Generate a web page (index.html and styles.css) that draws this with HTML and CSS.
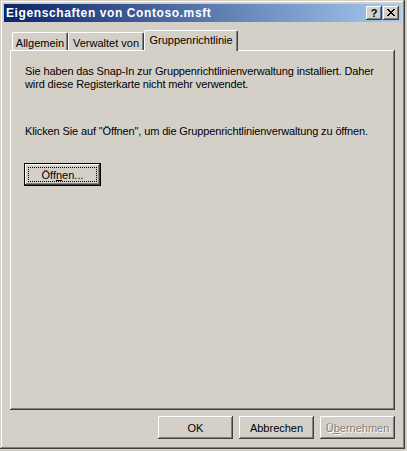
FILE: index.html
```html
<!DOCTYPE html>
<html lang="de">
<head>
<meta charset="utf-8">
<title>Eigenschaften von Contoso.msft</title>
<link rel="stylesheet" href="styles.css">
</head>
<body>
<div class="window">
  <div class="titlebar">
    <span class="title">Eigenschaften von Contoso.msft</span>
    <div class="caption-buttons">
      <div class="cap cap-help">?</div>
      <div class="cap cap-close">
        <svg width="8" height="7" viewBox="0 0 8 7" shape-rendering="crispEdges">
          <path d="M0 0h2v1h-2zM6 0h2v1h-2zM1 1h2v1h-2zM5 1h2v1h-2zM2 2h4v1h-4zM3 3h2v1h-2zM2 4h4v1h-4zM1 5h2v1h-2zM5 5h2v1h-2zM0 6h2v1h-2zM6 6h2v1h-2z" fill="#000"/>
        </svg>
      </div>
    </div>
  </div>
  <div class="body">
    <div class="tabs">
      <div class="tab tab-1">Allgemein</div>
      <div class="tab tab-2">Verwaltet von</div>
      <div class="tab tab-3 selected">Gruppenrichtlinie</div>
    </div>
    <div class="panel">
      <p class="text">Sie haben das Snap-In zur Gruppenrichtlinienverwaltung installiert. Daher<br>wird diese Registerkarte nicht mehr verwendet.</p>
      <p class="text text-2">Klicken Sie auf "Öffnen", um die Gruppenrichtlinienverwaltung zu öffnen.</p>
      <div class="btn btn-default">Öff<u>n</u>en...</div>
    </div>
    <div class="footer">
      <div class="btn">OK</div>
      <div class="btn">Abbrechen</div>
      <div class="btn disabled">Ü<u>b</u>ernehmen</div>
    </div>
  </div>
</div>
</body>
</html>
```

FILE: styles.css
```css
html, body {
  margin: 0;
  padding: 0;
  background: #d4d0c8;
}

body {
  font-family: "Liberation Sans", Arial, sans-serif;
  font-size: 11px;
  color: #000;
}

.window {
  width: 405px;
  height: 449px;
  box-sizing: border-box;
  padding: 4px;
  background: #d4d0c8;
  box-shadow: inset -1px -1px #404040, inset 1px 1px #d4d0c8, inset -2px -2px #808080, inset 2px 2px #ffffff;
  display: flex;
  flex-direction: column;
}

.titlebar {
  height: 18px;
  flex: none;
  background: linear-gradient(to right, #0a246a, #a6caf0);
  display: flex;
  align-items: center;
  padding-left: 2px;
  padding-right: 2px;
}

.title {
  color: #fff;
  font-weight: bold;
  font-size: 12px;
  letter-spacing: 0.6px;
  flex: 1;
  white-space: nowrap;
}

.caption-buttons {
  display: flex;
  gap: 0;
}

.cap {
  width: 16px;
  height: 14px;
  box-sizing: border-box;
  background: #d4d0c8;
  box-shadow: inset -1px -1px #404040, inset 1px 1px #ffffff, inset -2px -2px #808080, inset 2px 2px #d4d0c8;
  display: flex;
  align-items: center;
  justify-content: center;
}

.cap-help {
  font-weight: bold;
  font-size: 11px;
  line-height: 14px;
  padding-bottom: 1px;
  margin-right: 1px;
}

.cap-close svg {
  display: block;
  margin-top: -1px;
}

.body {
  flex: 1;
  display: flex;
  flex-direction: column;
  padding: 8px 6px 0;
}

.tabs {
  height: 20px;
  display: flex;
  align-items: flex-end;
  padding-left: 2px;
  position: relative;
  z-index: 1;
}

.tab {
  height: 18px;
  box-sizing: border-box;
  border-left: 1px solid #fff;
  border-top: 1px solid #fff;
  border-right: 1px solid #404040;
  border-radius: 2px 2px 0 0;
  box-shadow: inset -1px 0 #808080;
  background: #d4d0c8;
  display: flex;
  align-items: center;
  justify-content: center;
  padding-top: 2px;
  white-space: nowrap;
}

.tab-1 { width: 56px; }
.tab-2 { width: 76px; }
.tab-3 { width: 94px; }

.tab.selected {
  height: 21px;
  margin-bottom: -1px;
  padding-top: 0;
  padding-bottom: 3px;
}

.panel {
  height: 360px;
  box-sizing: border-box;
  background: #d4d0c8;
  box-shadow: inset -1px -1px #404040, inset 1px 1px #ffffff, inset -2px -2px #808080;
  padding: 15px 14px 0 15px;
}

.text {
  margin: 0;
  line-height: 13px;
  letter-spacing: -0.13px;
  white-space: nowrap;
}

.text-2 {
  margin-top: 34px;
}

.btn {
  width: 75px;
  height: 23px;
  box-sizing: border-box;
  background: #d4d0c8;
  box-shadow: inset -1px -1px #404040, inset 1px 1px #ffffff, inset -2px -2px #808080, inset 2px 2px #d4d0c8;
  display: flex;
  align-items: center;
  justify-content: center;
  white-space: nowrap;
}

.btn-default {
  width: 77px;
  margin-top: 25px;
  margin-left: -1px;
  border: 1px solid #000;
  outline: 1px dotted #000;
  outline-offset: -5px;
}

.footer {
  margin-top: 6px;
  display: flex;
  justify-content: flex-end;
  gap: 6px;
}

.btn.disabled {
  color: #808080;
  text-shadow: 1px 1px #ffffff;
}
```
